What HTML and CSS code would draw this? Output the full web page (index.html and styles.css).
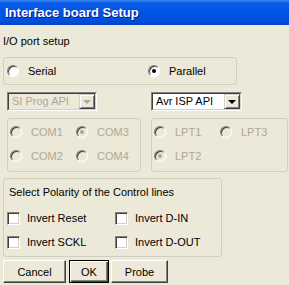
FILE: index.html
```html
<!DOCTYPE html>
<html lang="en">
<head>
    <meta charset="UTF-8">
    <title>Interface board Setup</title>
    <link rel="stylesheet" href="styles.css">
</head>
<body>
    <div class="titlebar">Interface board Setup</div>
    <div class="client">
        <p class="caption">I/O port setup</p>

        <div class="group mode">
            <label class="opt serial"><span class="radio"></span>Serial</label>
            <label class="opt"><span class="radio checked"></span>Parallel</label>
        </div>

        <div class="combos">
            <div class="combo si disabled">
                <div class="combo-field">
                    <span class="combo-text">SI Prog API</span>
                    <span class="combo-btn"><i></i></span>
                </div>
            </div>
            <div class="combo avr">
                <div class="combo-field">
                    <span class="combo-text">Avr ISP API</span>
                    <span class="combo-btn"><i></i></span>
                </div>
            </div>
        </div>

        <div class="ports">
            <div class="group portgrid com disabled">
                <label class="opt"><span class="radio"></span>COM1</label>
                <label class="opt"><span class="radio checked"></span>COM3</label>
                <label class="opt"><span class="radio"></span>COM2</label>
                <label class="opt"><span class="radio"></span>COM4</label>
            </div>
            <div class="group portgrid lpt disabled">
                <label class="opt"><span class="radio"></span>LPT1</label>
                <label class="opt"><span class="radio"></span>LPT3</label>
                <label class="opt"><span class="radio checked"></span>LPT2</label>
            </div>
        </div>

        <div class="group polarity">
            <p class="pol-title">Select Polarity of the Control lines</p>
            <div class="checks">
                <label class="opt"><span class="check"></span>Invert Reset</label>
                <label class="opt"><span class="check"></span>Invert D-IN</label>
                <label class="opt"><span class="check"></span>Invert SCKL</label>
                <label class="opt"><span class="check"></span>Invert D-OUT</label>
            </div>
        </div>

        <div class="buttons">
            <button class="btn cancel">Cancel</button>
            <button class="btn ok default">OK</button>
            <button class="btn probe">Probe</button>
        </div>
    </div>
</body>
</html>
```

FILE: styles.css
```css
body {
    margin: 0;
    width: 289px;
    height: 285px;
    overflow: hidden;
    background-color: #ece9d8;
    color: #000;
    font-family: "Liberation Sans", Arial, sans-serif;
    font-size: 11px;
}
p {
    margin: 0;
}
.titlebar {
    height: 25px;
    line-height: 25px;
    padding-left: 5px;
    color: #fff;
    font-size: 13px;
    font-weight: bold;
    text-shadow: 1px 1px #0a1883;
    background: linear-gradient(to bottom, #3a88f4 0, #0a5be6 3px, #0055e4 12px, #0050de 20px, #0044c8 25px);
}
.client {
    padding-left: 3px;
}
.caption {
    margin-top: 10px;
    line-height: 13px;
}
.group {
    box-sizing: border-box;
    border: 1px solid #d0d0bf;
    border-radius: 3px;
}
.opt {
    display: flex;
    align-items: center;
    white-space: nowrap;
}

/* radio buttons, classic look */
.radio {
    position: relative;
    flex: none;
    box-sizing: border-box;
    width: 12px;
    height: 12px;
    margin-right: 9px;
    border-radius: 50%;
    border: 1px solid;
    border-color: #808080 #fff #fff #808080;
    box-shadow: inset 1px 1px #404040;
    background-color: #fff;
}
.radio.checked::after {
    content: "";
    position: absolute;
    left: 3px;
    top: 3px;
    width: 4px;
    height: 4px;
    border-radius: 50%;
    background-color: #000;
}
.disabled {
    color: #aca899;
}
.disabled .radio {
    background-color: #ece9d8;
}
.disabled .radio.checked::after {
    background-color: #aca899;
}

/* checkboxes */
.check {
    flex: none;
    box-sizing: border-box;
    width: 13px;
    height: 13px;
    margin-right: 7px;
    border: 1px solid;
    border-color: #808080 #fff #fff #808080;
    box-shadow: inset 1px 1px #404040, inset -1px -1px #d4d0c8;
    background-color: #fff;
}

.mode {
    display: flex;
    align-items: center;
    width: 234px;
    height: 28px;
    margin-top: 9px;
    padding-left: 3px;
}
.mode .serial {
    width: 141px;
}

/* combo boxes */
.combos {
    display: flex;
    gap: 54px;
    margin-top: 7px;
    padding-left: 4px;
}
.combo {
    box-sizing: border-box;
    height: 19px;
    border: 1px solid;
    border-color: #808080 #fff #fff #808080;
}
.combo.si {
    width: 90px;
}
.combo.avr {
    width: 91px;
}
.combo-field {
    display: flex;
    height: 100%;
    box-sizing: border-box;
    border: 1px solid;
    border-color: #404040 #d4d0c8 #d4d0c8 #404040;
    background-color: #fff;
}
.combo-text {
    flex: 1;
    padding-left: 3px;
    line-height: 15px;
}
.combo-btn {
    display: flex;
    align-items: center;
    justify-content: center;
    box-sizing: border-box;
    width: 16px;
    border: 1px solid;
    border-color: #d4d0c8 #404040 #404040 #d4d0c8;
    box-shadow: inset 1px 1px #fff, inset -1px -1px #808080;
    background-color: #ece9d8;
}
.combo-btn i {
    width: 0;
    height: 0;
    border-top: 4px solid #000;
    border-left: 4px solid transparent;
    border-right: 4px solid transparent;
}
.combo.disabled .combo-field {
    background-color: #ece9d8;
}
.combo.disabled .combo-btn i {
    border-top-color: #aca899;
}

/* port groups */
.ports {
    display: flex;
    gap: 10px;
    margin-top: 7px;
    padding-left: 4px;
}
.portgrid {
    display: grid;
    grid-template-columns: 66px auto;
    grid-auto-rows: 24px;
    padding: 1px 0 3px 2px;
}
.com {
    width: 134px;
}
.lpt {
    width: 137px;
}

/* polarity */
.polarity {
    width: 219px;
    margin-top: 6px;
    padding: 7px 0 2px 3px;
}
.pol-title {
    margin-left: 2px;
    line-height: 13px;
}
.checks {
    display: grid;
    grid-template-columns: 108px auto;
    grid-auto-rows: 24px;
    margin-top: 7px;
}

/* buttons */
.buttons {
    display: flex;
    margin-top: 3px;
}
.btn {
    box-sizing: border-box;
    height: 23px;
    padding: 0;
    font: inherit;
    color: #000;
    background-color: #ece9d8;
    border: 1px solid;
    border-color: #fff #404040 #404040 #fff;
    box-shadow: inset -1px -1px #808080;
}
.btn.default {
    border-color: #000;
    box-shadow: inset 1px 1px #fff, inset -1px -1px #404040, inset -2px -2px #808080;
}
.cancel {
    width: 63px;
}
.ok {
    width: 40px;
    margin-left: 3px;
}
.probe {
    width: 57px;
    margin-left: 2px;
}
```
